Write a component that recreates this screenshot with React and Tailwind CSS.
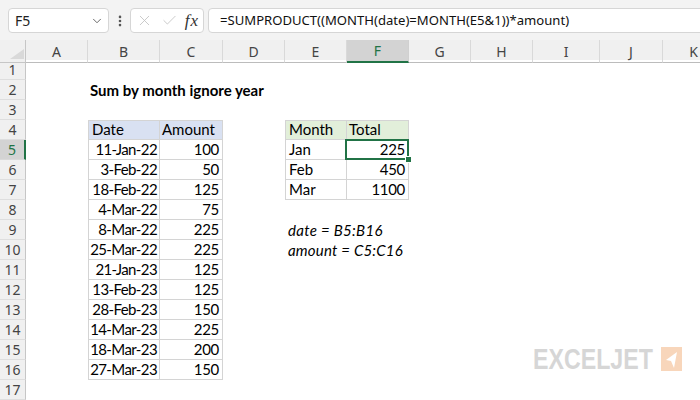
import React from 'react';
import { ChevronDown, EllipsisVertical, X, Check } from 'lucide-react';

// Sheet geometry: row header + columns A..K
const cols = ['A', 'B', 'C', 'D', 'E', 'F', 'G', 'H', 'I', 'J', 'K'];
const rows = Array.from({ length: 17 }, (_, i) => i + 1);

const data = [
  ['11-Jan-22', 100],
  ['3-Feb-22', 50],
  ['18-Feb-22', 125],
  ['4-Mar-22', 75],
  ['8-Mar-22', 225],
  ['25-Mar-22', 225],
  ['21-Jan-23', 125],
  ['13-Feb-23', 125],
  ['28-Feb-23', 150],
  ['14-Mar-23', 225],
  ['18-Mar-23', 200],
  ['27-Mar-23', 150],
];

const totals = [
  ['Jan', 225],
  ['Feb', 450],
  ['Mar', 1100],
];

const border = 'border-r border-b border-[#d4d4d4]';

// build the cell contents by address
const cells = {};
cells.B2 = { text: 'Sum by month ignore year', cls: 'font-bold text-[15.8px] pl-[2px]' };
cells.B4 = { text: 'Date', cls: `${border} border-l border-t bg-[#d9e1f2] pl-[3px]` };
cells.C4 = { text: 'Amount', cls: `${border} border-t bg-[#d9e1f2] pl-[2px]` };
data.forEach(([d, a], i) => {
  cells[`B${i + 5}`] = { text: d, cls: `${border} border-l justify-end pr-[2px] tracking-[-0.6px]` };
  cells[`C${i + 5}`] = { text: a, cls: `${border} justify-end pr-[3px] tracking-[-0.3px]` };
});
cells.E4 = { text: 'Month', cls: `${border} border-l border-t bg-[#e2efda] pl-[3px]` };
cells.F4 = { text: 'Total', cls: `${border} border-t bg-[#e2efda] pl-[2px]` };
totals.forEach(([m, t], i) => {
  cells[`E${i + 5}`] = { text: m, cls: `${border} border-l pl-[3px]` };
  cells[`F${i + 5}`] = { text: t, cls: `${border} justify-end pr-[3px] tracking-[-0.3px]` };
});
cells.E9 = { text: 'date = B5:B16', cls: 'italic pl-[3px] tracking-[0.3px]' };
cells.E10 = { text: 'amount = C5:C16', cls: 'italic pl-[3px] tracking-[0.2px]' };

const Cell = ({ addr }) => {
  const c = cells[addr];
  const selected = addr === 'F5';
  return (
    <div
      className={`relative flex items-end pb-[1px] min-w-0 whitespace-nowrap text-[15px] leading-[18px] text-black ${c ? c.cls : ''}`}
    >
      {c && <span className="relative z-10">{c.text}</span>}
      {selected && (
        <>
          <div className="absolute -left-[2px] -top-[1px] -right-[1px] -bottom-[1px] border-2 border-[#217346] z-20" />
          <div className="absolute -right-[4px] -bottom-[4px] w-[7px] h-[7px] bg-[#217346] border border-white z-30" />
        </>
      )}
    </div>
  );
};

const Logo = () => (
  <div className="absolute left-[533px] top-[346px] flex items-center gap-[4px] pointer-events-none">
    <span
      className="text-[29px] leading-[26px] font-bold text-[#d6d6d6] scale-x-[0.8] origin-left -mr-[26px]"
      style={{ fontFamily: '"Liberation Sans", Arial, sans-serif' }}
    >
      EXCELJET
    </span>
    <svg width="21" height="24" viewBox="0 0 21 24">
      <rect width="21" height="24" fill="#f8d6bb" />
      <polygon points="5,13 16,5 13,21 10,14" fill="#ffffff" />
    </svg>
  </div>
);

const App = () => {
  return (
    <div
      className="relative w-[700px] h-[400px] overflow-hidden bg-white"
      style={{ fontFamily: 'Lato, "Open Sans", sans-serif' }}
    >
      {/* Formula bar */}
      <div className="h-[40px] bg-[#f3f3f3] flex items-start pt-[8px] pl-[8px]">
        <div className="w-[101px] h-[25px] bg-white border border-[#d6d6d6] rounded-[4px] flex items-center justify-between pl-[6px] pr-[4px]">
          <span className="text-[14px] text-[#222]" style={{ fontFamily: '"Noto Sans", sans-serif' }}>F5</span>
          <ChevronDown size={14} strokeWidth={1.5} className="text-[#555]" />
        </div>
        <div className="w-[21px] h-[25px] flex items-center justify-center">
          <EllipsisVertical size={14} strokeWidth={2.5} className="text-[#555]" />
        </div>
        <div className="w-[74px] h-[25px] bg-white border border-[#d6d6d6] rounded-[4px] flex items-center pl-[5px] pr-[4px]">
          <X size={17} strokeWidth={1.2} className="text-[#c2c2c2]" />
          <Check size={17} strokeWidth={1.2} className="text-[#c2c2c2] ml-[8px]" />
          <span
            className="ml-auto italic text-[17px] leading-none text-[#333] tracking-[1px]"
            style={{ fontFamily: '"Liberation Serif", serif' }}
          >
            fx
          </span>
        </div>
        <div className="flex-1 -mr-[6px] ml-[4px] h-[25px] bg-white border border-[#d6d6d6] rounded-[4px] flex items-center pl-[11px]">
          <span className="text-[13.1px] text-[#111] whitespace-nowrap" style={{ fontFamily: '"Noto Sans", sans-serif' }}>
            =SUMPRODUCT((MONTH(date)=MONTH(E5&amp;1))*amount)
          </span>
        </div>
      </div>

      {/* Column headers */}
      <div
        className="grid grid-cols-[26px_62px_72px_63px_62px_62px_62px_62px_62px_67px_63px_62px] h-[20px] bg-[#f0f0f0] text-[14px] text-[#444]"
        style={{ fontFamily: '"Noto Sans", sans-serif' }}
      >
        <div className="relative border-r border-b border-[#c6c6c6]">
          <svg className="absolute right-[1px] bottom-[3px]" width="14" height="10" viewBox="0 0 14 10">
            <polygon points="14,0 14,10 0,10" fill="#d9d9d9" />
          </svg>
        </div>
        {cols.map((c) =>
          c === 'F' ? (
            <div key={c} className="flex items-center justify-center bg-[#d3d3d3] text-[#217346] border-b-2 border-[#217346] border-r border-r-[#d0d0d0]">
              {c}
            </div>
          ) : (
            <div key={c} className="flex items-center justify-center border-b border-[#bcbcbc] border-r border-r-[#d9d9d9]">
              {c}
            </div>
          )
        )}
      </div>

      {/* Sheet grid */}
      <div className="grid grid-cols-[26px_62px_72px_63px_62px_62px_62px_62px_62px_67px_63px_62px] grid-rows-[repeat(17,20px)]">
        {rows.map((r) => (
          <React.Fragment key={r}>
            {r === 5 ? (
              <div
                className="flex items-center justify-center bg-[#d3d3d3] text-[#217346] border-r-2 border-[#217346] border-b border-b-[#d9d9d9] text-[14px]"
                style={{ fontFamily: '"Noto Sans", sans-serif' }}
              >
                {r}
              </div>
            ) : (
              <div
                className="flex items-center justify-center bg-[#f0f0f0] text-[#444] border-r border-[#c6c6c6] border-b border-b-[#dedede] text-[14px]"
                style={{ fontFamily: '"Noto Sans", sans-serif' }}
              >
                {r}
              </div>
            )}
            {cols.map((c) => (
              <Cell key={c + r} addr={c + r} />
            ))}
          </React.Fragment>
        ))}
      </div>

      <Logo />
    </div>
  );
};

export default App;
